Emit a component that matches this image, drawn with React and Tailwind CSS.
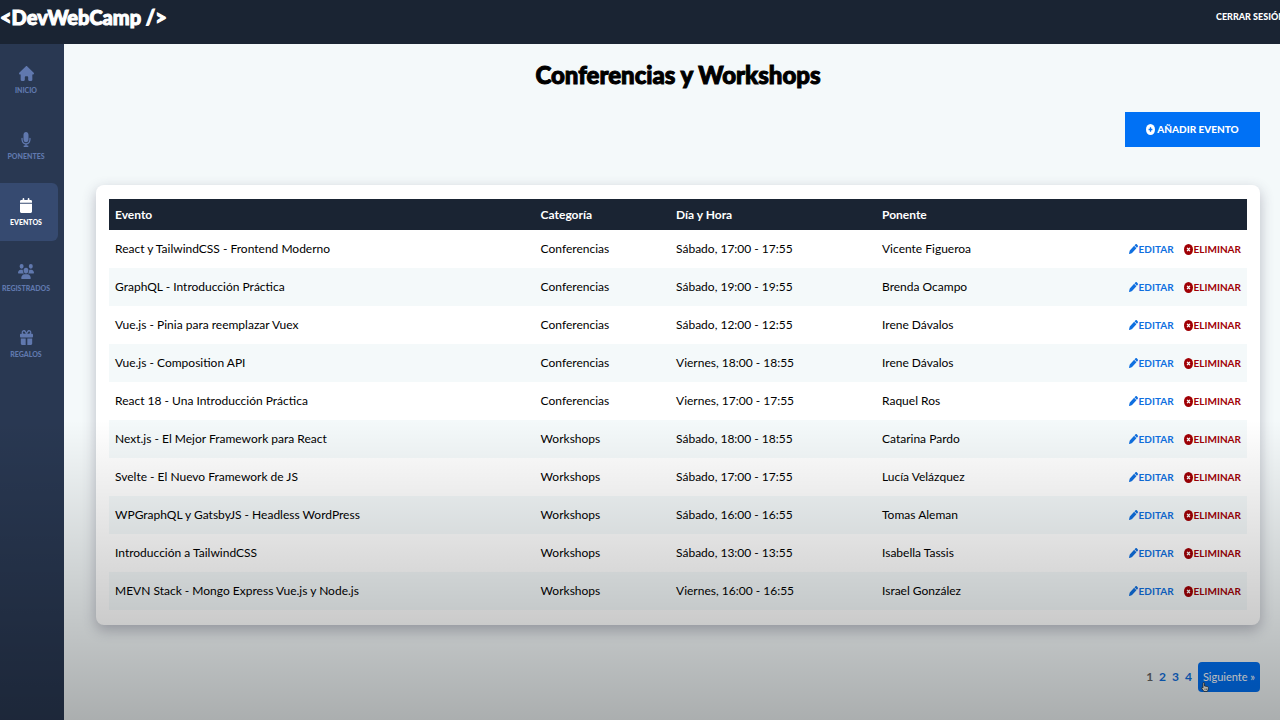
import {
  FaHouse,
  FaMicrophone,
  FaCalendar,
  FaUsers,
  FaGift,
  FaPen,
} from "react-icons/fa6";

const NAV = [
  { label: "Inicio", Icon: FaHouse, size: "h-[15px] w-[15px]" },
  { label: "Ponentes", Icon: FaMicrophone, size: "h-[15px] w-[10px]" },
  { label: "Eventos", Icon: FaCalendar, size: "h-[15px] w-[12px]", active: true },
  { label: "Registrados", Icon: FaUsers, size: "h-[15px] w-[16px]" },
  { label: "Regalos", Icon: FaGift, size: "h-[15px] w-[13px]" },
];

const EVENTS = [
  ["React y TailwindCSS - Frontend Moderno", "Conferencias", "Sábado, 17:00 - 17:55", "Vicente Figueroa"],
  ["GraphQL - Introducción Práctica", "Conferencias", "Sábado, 19:00 - 19:55", "Brenda Ocampo"],
  ["Vue.js - Pinia para reemplazar Vuex", "Conferencias", "Sábado, 12:00 - 12:55", "Irene Dávalos"],
  ["Vue.js - Composition API", "Conferencias", "Viernes, 18:00 - 18:55", "Irene Dávalos"],
  ["React 18 - Una Introducción Práctica", "Conferencias", "Viernes, 17:00 - 17:55", "Raquel Ros"],
  ["Next.js - El Mejor Framework para React", "Workshops", "Sábado, 18:00 - 18:55", "Catarina Pardo"],
  ["Svelte - El Nuevo Framework de JS", "Workshops", "Sábado, 17:00 - 17:55", "Lucía Velázquez"],
  ["WPGraphQL y GatsbyJS - Headless WordPress", "Workshops", "Sábado, 16:00 - 16:55", "Tomas Aleman"],
  ["Introducción a TailwindCSS", "Workshops", "Sábado, 13:00 - 13:55", "Isabella Tassis"],
  ["MEVN Stack - Mongo Express Vue.js y Node.js", "Workshops", "Viernes, 16:00 - 16:55", "Israel González"],
];

function PlusBadge() {
  return (
    <svg viewBox="0 0 9 11" className="h-[11px] w-[9px]" aria-hidden="true">
      <ellipse cx="4.5" cy="5.5" rx="4.5" ry="5.5" fill="currentColor" />
      <path d="M4.5 3.3v4.4M2.6 5.5h3.8" stroke="#0071f5" strokeWidth="1.3" />
    </svg>
  );
}

function CrossBadge() {
  return (
    <svg viewBox="0 0 9 11" className="h-[11px] w-[9px]" aria-hidden="true">
      <ellipse cx="4.5" cy="5.5" rx="4.5" ry="5.5" fill="currentColor" />
      <path d="M3.1 3.8l2.8 3.4M5.9 3.8l-2.8 3.4" stroke="#fff" strokeWidth="1.3" />
    </svg>
  );
}

function Pointer() {
  return (
    <svg viewBox="0 0 16 20" className="absolute bottom-0 left-[3px] h-[10px] w-[8px]" aria-hidden="true">
      <path
        d="M4 2.5c0-2 3-2 3 0V8l6 1.2c1.6.4 2 1.4 1.8 3L14 16l-1.5 3H6L1.5 13c-1-1.6.8-2.8 2.5-1z"
        fill="#f4f4ec"
        stroke="#222"
        strokeWidth="1.4"
      />
      <path d="M8 13v3M11 13v3" stroke="#222" strokeWidth="1" />
    </svg>
  );
}

function Sidebar() {
  return (
    <aside className="w-16 shrink-0 bg-[#293852] pt-[7px]">
      <nav className="flex flex-col gap-2">
        {NAV.map(({ label, Icon, size, active }) => (
          <a
            key={label}
            href="#"
            className={
              "mr-[6px] flex h-[58px] flex-col items-center justify-center gap-1 rounded-r-md pr-[6px] text-[7px] leading-[10px] font-black uppercase " +
              (active ? "bg-[#364a70] text-white" : "text-[#6078ae]")
            }
          >
            <Icon className={size} preserveAspectRatio="none" />
            <span>{label}</span>
          </a>
        ))}
      </nav>
    </aside>
  );
}

function EventsTable() {
  return (
    <div className="rounded-lg bg-white px-[13px] pt-[14px] pb-[15px] shadow-[0_5px_14px_rgba(60,55,85,0.32)]">
      <table className="w-full table-fixed border-collapse text-left text-[12px] leading-4 text-black">
        <colgroup>
          <col className="w-[37.4%]" />
          <col className="w-[11.9%]" />
          <col className="w-[18.1%]" />
          <col />
          <col className="w-[126px]" />
        </colgroup>
        <thead className="bg-[#1a2433] text-white">
          <tr className="h-[31px]">
            <th className="px-[6px] font-bold">Evento</th>
            <th className="px-[6px] font-bold">Categoría</th>
            <th className="px-[6px] font-bold">Día y Hora</th>
            <th className="px-[6px] font-bold">Ponente</th>
            <th aria-label="Acciones" />
          </tr>
        </thead>
        <tbody>
          {EVENTS.map(([name, category, time, speaker]) => (
            <tr key={name} className="h-[38px] even:bg-[#f4f9fa]">
              <td className="px-[6px]">{name}</td>
              <td className="px-[6px]">{category}</td>
              <td className="px-[6px]">{time}</td>
              <td className="px-[6px]">{speaker}</td>
              <td className="pr-[6px]">
                <div className="flex items-center justify-end gap-[10px] text-[10px] font-bold uppercase">
                  <a href="#" className="flex items-center gap-px text-[#0f6fe0]">
                    <FaPen className="h-[10px] w-[9px]" preserveAspectRatio="none" />
                    Editar
                  </a>
                  <button type="button" className="flex items-center gap-px uppercase text-[#a00005]">
                    <CrossBadge />
                    Eliminar
                  </button>
                </div>
              </td>
            </tr>
          ))}
        </tbody>
      </table>
    </div>
  );
}

function Pagination() {
  return (
    <nav aria-label="Paginación" className="mt-[37px] flex items-center justify-end gap-[6px] text-[12px] font-bold text-[#0f6fe0]">
      <span className="text-[#666]">1</span>
      <a href="#">2</a>
      <a href="#">3</a>
      <a href="#">4</a>
      <a
        href="#"
        className="relative flex h-[30px] w-[62px] items-center justify-center rounded bg-[#0071f5] text-[11px] font-normal whitespace-nowrap text-white"
      >
        Siguiente »
        <Pointer />
      </a>
    </nav>
  );
}

export default function App() {
  return (
    <div className="relative flex min-h-screen flex-col bg-[#f4f9fa] font-[Lato,sans-serif]">
      <header className="flex h-11 items-start justify-between overflow-hidden bg-[#1a2433] text-white">
        <a href="#" className="pt-[3px] text-[20px] leading-7 font-black whitespace-nowrap [-webkit-text-stroke:1px_white]">
          &lt;DevWebCamp /&gt;
        </a>
        <button type="button" className="w-16 shrink-0 pt-[9px] text-left text-[9px] leading-4 font-black whitespace-nowrap uppercase">
          Cerrar Sesión
        </button>
      </header>
      <div className="flex flex-1">
        <Sidebar />
        <main className="min-w-0 flex-1 pr-5 pl-8">
          <h1 className="pt-[15px] text-center text-[24px] leading-8 font-black text-black [-webkit-text-stroke:1px_black]">
            Conferencias y Workshops
          </h1>
          <div className="mt-[21px] mb-[38px] flex justify-end">
            <a
              href="#"
              className="flex h-[35px] w-[135px] items-center justify-center gap-[2px] bg-[#0071f5] text-[10px] font-black uppercase text-white"
            >
              <PlusBadge />
              Añadir Evento
            </a>
          </div>
          <EventsTable />
          <Pagination />
        </main>
      </div>
      <div className="pointer-events-none absolute inset-x-0 bottom-0 h-[300px] bg-linear-to-t from-black/30 to-transparent" />
    </div>
  );
}
